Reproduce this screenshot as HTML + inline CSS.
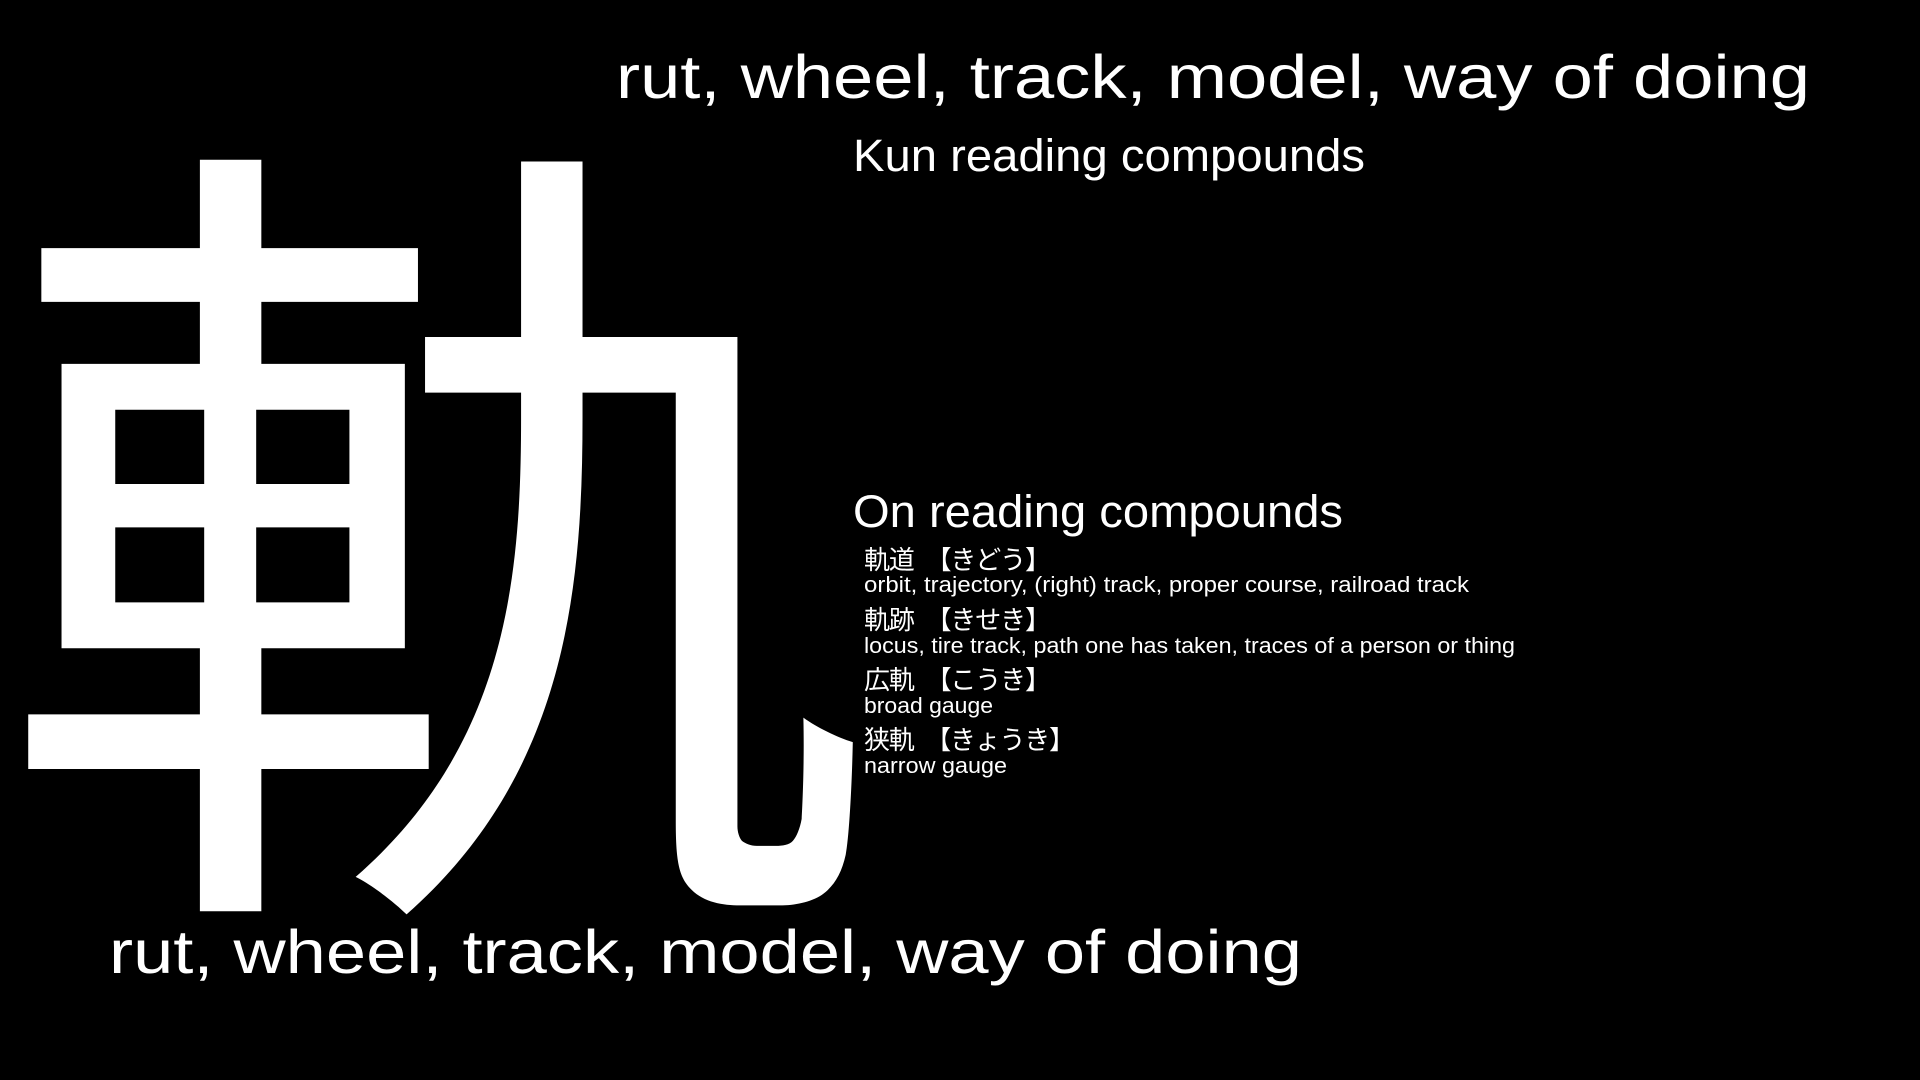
<!DOCTYPE html>
<html><head><meta charset="utf-8"><style>
html,body{margin:0;padding:0;background:#000;width:1920px;height:1080px;overflow:hidden}
svg{display:block}
text{fill:#fff;font-family:"Liberation Sans","Noto Sans CJK JP",sans-serif}
.j{font-family:"Noto Sans CJK JP","Liberation Sans",sans-serif}
</style></head><body>
<svg width="1920" height="1080" viewBox="0 0 1920 1080">
<rect width="1920" height="1080" fill="#000"/>
<g transform="translate(-7,57) scale(1,0.928)">
<text class="j" x="0" y="850" font-size="880" textLength="880" lengthAdjust="spacingAndGlyphs">軌</text>
</g>
<text x="616" y="98" font-size="61" textLength="1194" lengthAdjust="spacingAndGlyphs">rut, wheel, track, model, way of doing</text>
<text x="853" y="171" font-size="45" textLength="512" lengthAdjust="spacingAndGlyphs">Kun reading compounds</text>
<text x="853" y="527" font-size="45" textLength="490" lengthAdjust="spacingAndGlyphs">On reading compounds</text>
<text class="j" x="864" y="569" font-size="26" textLength="187" lengthAdjust="spacing">軌道　【きどう】</text>
<text x="864" y="592" font-size="22" textLength="605" lengthAdjust="spacingAndGlyphs">orbit, trajectory, (right) track, proper course, railroad track</text>
<text class="j" x="864" y="629" font-size="26" textLength="187" lengthAdjust="spacing">軌跡　【きせき】</text>
<text x="864" y="653" font-size="22" textLength="651" lengthAdjust="spacingAndGlyphs">locus, tire track, path one has taken, traces of a person or thing</text>
<text class="j" x="864" y="689" font-size="26" textLength="187" lengthAdjust="spacing">広軌　【こうき】</text>
<text x="864" y="713" font-size="22" textLength="129" lengthAdjust="spacingAndGlyphs">broad gauge</text>
<text class="j" x="864" y="749" font-size="26" textLength="211" lengthAdjust="spacing">狭軌　【きょうき】</text>
<text x="864" y="773" font-size="22" textLength="143" lengthAdjust="spacingAndGlyphs">narrow gauge</text>
<text x="109" y="973" font-size="61" textLength="1193" lengthAdjust="spacingAndGlyphs">rut, wheel, track, model, way of doing</text>
</svg>
</body></html>
